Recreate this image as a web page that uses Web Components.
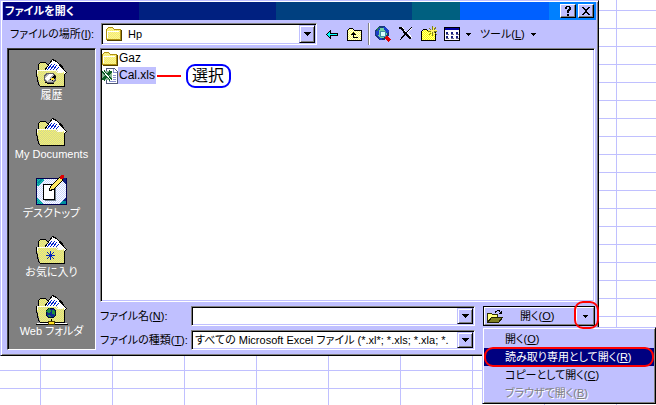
<!DOCTYPE html>
<html lang="ja">
<head>
<meta charset="utf-8">
<title>ファイルを開く</title>
<style>
html,body{margin:0;min-height:100vh}
body{
  --face:#c0c0ff;--navy:#000080;
  font:11px/16px "Liberation Sans","Noto Sans CJK JP",sans-serif;
  font-feature-settings:"palt";color:#000;overflow:hidden;
}
</style>
</head>
<body>
<x-sheet>
  <x-dialog>
    <x-titlebar slot="title">ファイルを開く</x-titlebar>
    <x-toolbar slot="toolbar"></x-toolbar>
    <x-places slot="places">
      <x-place icon="history">履歴</x-place>
      <x-place icon="docs">My Documents</x-place>
      <x-place icon="desktop">デスクトップ</x-place>
      <x-place icon="favorites">お気に入り</x-place>
      <x-place icon="web">Web フォルダ</x-place>
    </x-places>
    <x-file-list>
      <x-file icon="folder">Gaz</x-file>
      <x-file icon="excel" selected>Cal.xls<x-callout slot="note">選択</x-callout></x-file>
    </x-file-list>
    <x-fields></x-fields>
  </x-dialog>
</x-sheet>

<script>
const define = (name, markup, setup) => {
  const t = document.createElement('template');
  t.innerHTML = '<style>*{box-sizing:border-box}button,input,select{font:inherit;font-feature-settings:inherit;color:inherit;margin:0}</style>' + markup;
  customElements.define(name, class extends HTMLElement {
    constructor() {
      super();
      this.attachShadow({mode: 'open'}).append(t.content.cloneNode(true));
    }
    connectedCallback() { if (setup) setup(this, this.shadowRoot); }
  });
};

const dither = (id, a, b) => `<pattern id="${id}" width="2" height="2" patternUnits="userSpaceOnUse"><path fill="${a}" d="M0 0h2v2H0z"/><path fill="${b}" d="M0 0h1v1H0zM1 1h1v1H1z"/></pattern>`;
const bigFolder = over => `<svg width="32" height="32" viewBox="0 0 32 32"><defs>${dither('y', '#f8f868', '#d0d098')}</defs>
 <path fill="url(#y)" stroke="#000" d="M2.500 16V8.500L4.500 6.500H9.500L11.500 8.500H24.500L26.500 10.500V17"/>
 <path fill="#fff" stroke="#000" d="M8.500 14.500L16.500 3.500L20.500 5.500L30.500 16.500L26.500 20.500Z"/>
 <path stroke="#0020d0" d="M11 14l5-6M14 14l5-6M17 14l4-5M20 14l3-3"/>
 <path fill="url(#y)" d="M1 14H20L22 16H28L29 30H4L1 18Z"/>
 <path fill="none" stroke="#000" d="M.5 14V18.500L2.500 28.500L4.500 30.500H28.500V19"/>
 <path fill="none" stroke="#fffff0" d="M1.500 18V14.500H19.500L21.500 16.500H27"/>
 ${over}</svg>`;
const smallFolder = `<defs>${dither('s', '#ffff80', '#f0e080')}</defs><path fill="url(#s)" stroke="#b09010" d="M.5 13.500V3.500L2.500 1.500H6.500L8.500 3.500H14.500V13.500Z"/><path stroke="#fff" fill="none" d="M1.500 12V5.500H13"/><path stroke="#504000" fill="none" d="M1 14.500H15.500V4"/>`;
const svg = (inner, w = 16) => `<svg width="${w}" height="16" viewBox="0 0 ${w} 16">${inner}</svg>`;
const ICONS = {
  history: bigFolder('<ellipse cx="14" cy="22" rx="6" ry="5" fill="#b8b8b8" stroke="#606060"/><path fill="#fff" d="M10 21l4-3h3l-3 4-2 3-3-2z"/><path fill="#000" d="M14 24l5-6 1 3-3 4z"/><path fill="#ffe030" d="M15 22h3v2h-3z"/><path stroke="#000" fill="none" d="M9 26l3 1.500h6"/>'),
  docs: bigFolder(''),
  desktop: `<svg width="32" height="32" viewBox="0 0 32 32"><defs>${dither('d', '#fff', '#c8d4ff')}${dither('t', '#00a0a0', '#20c0b0')}</defs><path fill="url(#d)" d="M0 4h31v27H0z"/><path fill="url(#t)" d="M0 4h8v2L2 12H0zM0 23l9 8H0z"/><path fill="#102080" d="M22 31l9-9v9zM25 4h6v8l-4-4z"/><path fill="#0090a0" d="M26 27h4v3h-6zM4 5h3L2 10V7z"/><path fill="none" stroke="#000050" d="M0 30.500H31M30.500 4V31M.5 31V5M0 4.500H23"/><path fill="#fff" stroke="#000" d="M7.500 10.500H18.500V25.500H7.500Z"/><path fill="none" stroke="#708090" d="M19.500 12V26.500H9"/><path fill="#ffe860" stroke="#000" d="M13 16l2-4L24 3l3 3-9 9-5 2z"/><circle cx="26" cy="3" r="2" fill="#e00000"/></svg>`,
  favorites: bigFolder('<path stroke="#0020c0" d="M14.500 18v9M10 22.500h9M11 19l7 7M18 19l-7 7"/><path fill="#0020c0" d="M13 21h3v3h-3z"/>'),
  web: bigFolder('<circle cx="15" cy="21" r="5" fill="#102890" stroke="#001030"/><path fill="#209040" d="M11 18l3-2 1 3-2 2-3-1zM16 18l3 1v4l-3-1zM12 23l3 1-1 2z"/><path stroke="#000" d="M15.500 27v4M0 32.500H32"/><path stroke="#fff" d="M1 31.500H31"/><path fill="#ffe020" stroke="#504000" d="M12.500 29.500h6v3h-6z"/>').replace('<svg ', '<svg style="overflow:visible" '),
  folder: svg(smallFolder),
  excel: svg('<path fill="#fff" stroke="#505878" d="M4.500.5H12.500L15.500 3.500V15.500H4.500Z"/><path stroke="#8890d0" fill="none" d="M11.500 1v3.500H15M11 7.500h3M11 9.500h3M11 11.500h3M7 13.500h7"/><path fill="#90b898" d="M0 3h10v9H0z"/><path stroke="#106028" stroke-width="3" d="M1 3l8 9M9 3L1 12"/><path stroke="#fff" d="M1 3l8 9"/>'),
  back: svg('<path fill="#00ffff" stroke="#000" d="M2.500 8.500L6.500 4.500V7.500H13.500V9.500H6.500V12.500Z"/>'),
  up: svg(`<defs>${dither('u', '#ffff60', '#fffff0')}</defs><path fill="url(#u)" stroke="#000" d="M.5 14.500V4.500L2.500 2.500H5.500L7.500 4.500H14.500V14.500Z"/><path fill="none" stroke="#000" d="M6.500 7V11.500H11M4 8.500H9"/><path d="M6 6h1v1h1v1H5V7h1z"/>`),
  search: svg('<circle cx="7" cy="7" r="6" fill="#70d0a0" stroke="#183878" stroke-width="2"/><path fill="#1840c8" d="M8 1h3l3 4-2 3-2-3zM1 5l4-3-1 5-1 4-2-2zM3 10l5 3-3 1z"/><path fill="#208050" d="M2 2l3-1-3 5z"/><circle cx="8" cy="8" r="3" fill="#d8ffff" stroke="#4090a0"/><path stroke="#e00000" stroke-width="3" d="M11 11l4 4"/>'),
  delete: svg('<path stroke="#fff" fill="none" d="M4 1.500l4 4.500M10 7l4 5M14 2L9 7"/><path fill="none" stroke="#000" stroke-width="2" d="M1 2h2l5 6 5 5"/><path fill="none" stroke="#000" d="M13.500 1.500L8 7l-6 7M3 13l5-5"/>'),
  newfolder: svg(`<defs>${dither('n', '#ffff00', '#ffff90')}</defs><path fill="url(#n)" stroke="#000" d="M.5 14.500V5.500L2.500 3.500H5.500L7.500 5.500H14.500V14.500Z"/><path stroke="#fff060" stroke-width="2" d="M7 5h9M11.500 1v8"/><path stroke="#808020" d="M11.500 0v4M11.500 6v4M7 5.500h3M13 5.500h3M8 2l2 2M13 6l3 3M15 1l-2 3M8 9l2-2"/>`),
  views: svg('<path fill="#fff" stroke="#000" d="M.5 1.500H15.500V14.500H.5Z"/><path fill="#0000a0" d="M1 2h14v2H1z"/><path fill="#182080" d="M2 6h2v2H2zM7 6h2v2H7zM12 6h2v2h-2zM2 10h2v2H2zM7 10h2v2H7zM12 10h2v2h-2z"/><path stroke="#707090" d="M2 8.500h3M7 8.500h3M12 8.500h3M2 12.500h3M7 12.500h3M12 12.500h3"/>'),
  open: svg('<path fill="#ffff80" stroke="#303000" d="M.5 14.500V5.500H4.500L5.500 6.500H10.500V9"/><path fill="#808020" stroke="#202000" d="M.5 14.500L4.500 9.500H15.500L11.500 14.500Z"/><path fill="none" stroke="#000" d="M8 4.500L10.500 2.500H12L14.500 5.500M12 5.500H15M14.500 3V6"/>'),
  arrow: '<svg width="7" height="4" viewBox="0 0 7 4"><path d="M0 0h7v1H0zM1 1h5v1H1zM2 2h3v1H2zM3 3h1v1H3z"/></svg>',
  smallarrow: '<svg width="5" height="3" viewBox="0 0 5 3"><path d="M0 0h5v1H0zM1 1h3v1H1zM2 2h1v1H2z"/></svg>',
  help: '<svg width="10" height="10" viewBox="0 0 10 10"><path d="M2 1h1V0h4v1h1v3H7v1H6v2H4V4h1V3h1V1H4v2H2zM4 8h2v2H4z"/></svg>',
  close: '<svg width="10" height="10" viewBox="0 0 10 10"><path d="M1 1h2v1h1v1h2V2h1V1h2v1H8v1H7v1H6v2h1v1h1v1h1v1H7V8H6V7H4v1H3v1H1V8h1V7h1V6h1V4H3V3H2V2H1z"/></svg>'
};

define('x-icon', '<style>:host{display:inline-flex;flex:none}svg{display:block;fill:#000;shape-rendering:crispEdges}</style><span></span>',
  (el, root) => { root.querySelector('span').innerHTML = ICONS[el.getAttribute('name')] || ''; });

define('x-sheet', `<style>:host{display:block;min-height:100vh;padding-right:57px;box-sizing:border-box;
  background:repeating-linear-gradient(90deg,transparent 0 40px,var(--face) 40px 41px,transparent 41px 72px),
  repeating-linear-gradient(transparent 0 10px,var(--face) 10px 11px,transparent 11px 18px),#fff}</style><slot></slot>`);

define('x-dialog', `<style>
:host{display:block;box-sizing:border-box;background:var(--face);padding:0 2px 5px;border:1px solid;border-color:var(--face) #000 #000 var(--face);box-shadow:inset 1px 1px #fff,inset -1px -1px #808080}
.title{padding-top:1px}
.body{display:flex;gap:4px;padding:0 1px 0 4px}
main{flex:1;min-width:0;display:flex;flex-direction:column}
</style>
<div class="title"><slot name="title"></slot></div><slot name="toolbar"></slot>
<div class="body"><slot name="places"></slot><main><slot></slot></main></div>`);

define('x-titlebar', `<style>
:host{display:flex;align-items:center;height:18px;padding:0 2px;color:#fff;font-weight:bold;
 background:linear-gradient(90deg,#000080 23%,#002080 23% 46%,#004080 46% 69%,#006080 69% 77%,#0060ff 77% 92%,#0080ff 92%)}
span{flex:1}
button{width:16px;height:14px;padding:0;display:flex;align-items:center;justify-content:center;background:var(--face);border:1px solid;border-color:#fff #000 #000 #fff;box-shadow:inset -1px -1px #808080}
button+button{margin-left:2px}
</style><span><slot></slot></span><button aria-label="ヘルプ"><x-icon name="help"></x-icon></button><button aria-label="閉じる"><x-icon name="close"></x-icon></button>`);

define('x-combo', `<style>
:host{display:flex;align-items:center;min-width:0}
label{width:91px;flex:none;white-space:nowrap}
.box{flex:1;min-width:0;height:var(--h,20px);display:flex;align-items:center;background:#fff;padding:1px;border:1px solid;border-color:#808080 #fff #fff #808080;box-shadow:inset 1px 1px #000,inset -1px -1px var(--face)}
.box>x-icon{margin:0 4px 0 3px}
select,input{appearance:none;flex:1;min-width:0;width:0;height:16px;line-height:16px;border:0;border-radius:0;padding:0 2px;background:none;outline:0;overflow:hidden;white-space:nowrap;text-overflow:clip}
.drop{align-self:stretch;width:16px;flex:none;padding:0;display:flex;align-items:center;justify-content:center;background:var(--face);border:1px solid;border-color:var(--face) #000 #000 var(--face);box-shadow:inset 1px 1px #fff,inset -1px -1px #808080;pointer-events:none}
</style><label for="c"><slot></slot></label><div class="box"></div>`,
  (el, root) => {
    const icon = el.getAttribute('icon'), value = el.getAttribute('value');
    root.querySelector('.box').innerHTML = (icon ? `<x-icon name="${icon}"></x-icon>` : '') +
      (value === null ? '<input id="c" type="text">' : `<select id="c"><option>${value}</option></select>`) +
      '<span class="drop"><x-icon name="arrow"></x-icon></span>';
  });

define('x-toolbar', `<style>
:host{display:flex;align-items:center;gap:7px;height:28px;padding:0 8px 0 7px}
x-combo{flex:0 1 307px;--h:22px}
x-combo::part(value){font-size:12px}
button{padding:0;border:0;background:none;display:flex;align-items:center;gap:6px;flex:none;white-space:nowrap}
.tools{padding-left:2px}
i{width:2px;height:22px;margin:0 -2px;border-left:1px solid #808080;border-right:1px solid #fff;box-sizing:border-box}
</style>
<x-combo icon="folder" value="Hp">ファイルの場所(<u>I</u>):</x-combo>
<button aria-label="戻る"><x-icon name="back"></x-icon></button>
<button aria-label="1 つ上のフォルダへ"><x-icon name="up"></x-icon></button><i></i>
<button aria-label="Web の検索"><x-icon name="search"></x-icon></button>
<button aria-label="削除"><x-icon name="delete"></x-icon></button>
<button aria-label="新しいフォルダの作成"><x-icon name="newfolder"></x-icon></button>
<button aria-label="表示"><x-icon name="views"></x-icon><x-icon name="smallarrow"></x-icon></button>
<button class="tools"><span>ツール(<u>L</u>)</span><x-icon name="smallarrow"></x-icon></button>`);

define('x-places', `<style>:host{display:flex;flex-direction:column;flex:none;width:89px;box-sizing:border-box;padding:1px 0 4px;background:#808080;border:1px solid;border-color:#404040 #fff #fff #404040;box-shadow:inset 1px 1px #000}</style><slot></slot>`);
define('x-place', `<style>:host{display:block}
button{width:100%;height:59px;padding:6px 0 0;border:0;background:none;color:#fff;display:flex;flex-direction:column;align-items:center;line-height:14px;white-space:nowrap}</style>
<button><x-icon></x-icon><span><slot></slot></span></button>`,
  (el, root) => { const i = root.querySelector('x-icon'); i.setAttribute('name', el.getAttribute('icon')); i.connectedCallback(); });

define('x-file-list', `<style>:host{display:block;flex:1;box-sizing:border-box;background:#fff;border:1px solid;border-color:#808080 #fff #fff #808080;box-shadow:inset 1px 1px #000,inset -1px -1px var(--face);padding:1px}</style><slot></slot>`);
define('x-file', `<style>:host{display:flex;align-items:center;height:17px;font-size:12px}
.name{padding:0 1px;line-height:17px}
:host([selected]) .name{background:var(--face)}</style>
<x-icon></x-icon><span class="name"><slot></slot></span><slot name="note"></slot>`,
  (el, root) => { const i = root.querySelector('x-icon'); i.setAttribute('name', el.getAttribute('icon')); i.connectedCallback(); });
define('x-callout', `<style>:host{display:flex;align-items:center;font-size:16px;line-height:20px}
i{width:24px;height:2px;background:#f00;margin:0 5px 0 1px}
span{border:2px solid #00f;border-radius:9px;padding:0 5px 0 4px;background:#fff}</style><i></i><span><slot></slot></span>`);

define('x-fields', `<style>
:host{display:grid;grid-template-columns:1fr 112px;gap:4px 8px;padding-top:4px}
</style>
<x-combo>ファイル名(<u>N</u>):</x-combo><x-split-button></x-split-button>
<x-combo value="すべての Microsoft Excel ファイル (*.xl*; *.xls; *.xla; *.">ファイルの種類(<u>T</u>):</x-combo>`);

define('x-split-button', `<style>
:host{display:flex;position:relative;border:1px solid #000;box-sizing:border-box;height:20px}
button{padding:0;background:var(--face);border:1px solid;border-color:#fff #808080 #808080 #fff;display:flex;align-items:center;justify-content:center}
.open{flex:1;justify-content:flex-start;padding-left:2px;gap:17px}
.more{width:18px}
.ring{position:absolute;top:-6px;right:-5px;width:25px;height:28px;border:2px solid #f00;border-radius:9px;pointer-events:none;z-index:2}
x-menu{position:absolute;top:20px;left:-2px;z-index:1}
</style>
<button class="open"><x-icon name="open"></x-icon><span>開く(<u>O</u>)</span></button>
<button class="more" aria-label="その他の開き方"><x-icon name="smallarrow"></x-icon></button>
<x-menu><x-menu-item>開く(<u>O</u>)</x-menu-item><x-menu-item current>読み取り専用として開く(<u>R</u>)</x-menu-item><x-menu-item>コピーとして開く(<u>C</u>)</x-menu-item><x-menu-item disabled>ブラウザで開く(<u>B</u>)</x-menu-item></x-menu>
<span class="ring"></span>`);

define('x-menu', `<style>:host{display:block;width:174px;box-sizing:border-box;padding:2px 1px 1px;background:var(--face);border:1px solid;border-color:var(--face) #000 #000 var(--face);box-shadow:inset 1px 1px #fff,inset -1px -1px #808080}</style><slot></slot>`);
define('x-menu-item', `<style>:host{display:block;position:relative}
button{display:block;width:100%;height:18px;line-height:18px;padding:0 0 0 21px;border:0;background:none;text-align:left;white-space:nowrap}
:host([current]) button{background:var(--navy);color:#fff}
:host([current])::after{content:"";position:absolute;inset:-1px 0;border:2px solid #f00;border-radius:9px}
:host([disabled]) button{color:#808080;text-shadow:1px 1px #fff}</style>
<button><slot></slot></button>`, (el, root) => { root.querySelector('button').disabled = el.hasAttribute('disabled'); });
</script>
</body>
</html>
